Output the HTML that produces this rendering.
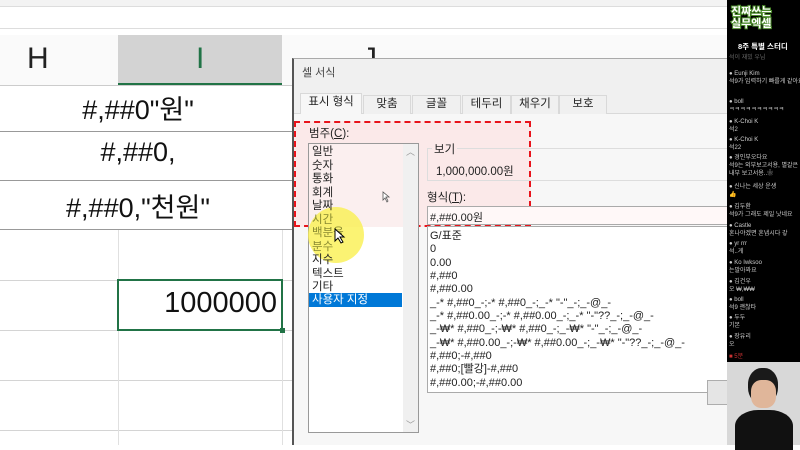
<!DOCTYPE html>
<html><head><meta charset="utf-8"><style>
*{margin:0;padding:0;box-sizing:border-box}
body{width:800px;height:445px;overflow:hidden;position:relative;background:#fff;font-family:"Liberation Sans","Noto Sans CJK KR",sans-serif}
.a{position:absolute}
.hl{position:absolute;height:1px;background:#d4d4d4}
.vl{position:absolute;width:1px;background:#e0e0e0}
.cell{position:absolute;font-size:27px;color:#111;text-align:center;width:290px;left:0}
.li{position:absolute;left:312px;font-size:11.5px;color:#222;line-height:13px}
.fi{position:absolute;left:430px;font-size:11px;color:#222;white-space:nowrap;line-height:13px}
.tab{position:absolute;top:95px;height:19px;font-size:11.5px;color:#222;text-align:center;border:1px solid #d9d9d9;border-bottom:none;background:#f0f0f0;line-height:17px}
.ch{position:absolute;left:729px;font-size:6px;color:#ccc;white-space:nowrap;line-height:8px}
</style></head><body>
<div class="a" style="left:0;top:0;width:800px;height:7px;background:#f3f3f3;border-bottom:1px solid #ddd"></div>
<div class="a" style="left:0;top:28px;width:800px;height:1px;background:#ddd"></div>
<div class="a" style="left:0;top:35px;width:800px;height:50px;background:#fafafa"></div>
<div class="a" style="left:118px;top:35px;width:164px;height:50px;background:#d3d3d3;border-bottom:2px solid #217346"></div>
<div class="a" style="left:27px;top:42px;font-size:30px;color:#222">H</div>
<div class="a" style="left:196px;top:42px;font-size:30px;color:#217346">I</div>
<div class="a" style="left:362px;top:42px;font-size:30px;color:#222">J</div>
<div class="hl" style="left:0;top:85px;width:293px;background:#ccc"></div>
<div class="hl" style="left:0;top:131px;width:293px;background:#999"></div>
<div class="hl" style="left:0;top:180px;width:293px;background:#999"></div>
<div class="hl" style="left:0;top:229px;width:293px;background:#999"></div>
<div class="hl" style="left:0;top:280px;width:293px"></div>
<div class="hl" style="left:0;top:330px;width:293px"></div>
<div class="hl" style="left:0;top:380px;width:293px"></div>
<div class="hl" style="left:0;top:430px;width:293px"></div>
<div class="vl" style="left:118px;top:230px;height:215px"></div>
<div class="vl" style="left:282px;top:230px;height:215px"></div>
<div class="cell" style="top:88px;left:-7px">#,##0"원"</div>
<div class="cell" style="top:137px;left:-7px">#,##0,</div>
<div class="cell" style="top:186px;left:-7px">#,##0,"천원"</div>
<div class="a" style="left:117px;top:279px;width:166px;height:52px;border:2px solid #217346"></div>
<div class="a" style="left:280px;top:328px;width:5px;height:5px;background:#217346"></div>
<div class="a" style="left:117px;top:287px;width:160px;text-align:right;font-size:29px;color:#111">1000000</div>
<!-- dialog -->
<div class="a" style="left:292px;top:58px;width:438px;height:387px;background:#f0f0f0;border-left:2px solid #555;border-top:1px solid #aaa"></div>
<div class="a" style="left:302px;top:64px;font-size:11px;color:#444">셀 서식</div>
<div class="a" style="left:294px;top:113px;width:436px;height:332px;background:#f7f7f7;border-top:1px solid #d9d9d9"></div>
<div class="tab" style="left:300px;width:62px;top:93px;height:21px;background:#f7f7f7">표시 형식</div>
<div class="tab" style="left:363px;width:48px">맞춤</div>
<div class="tab" style="left:412px;width:49px">글꼴</div>
<div class="tab" style="left:462px;width:49px">테두리</div>
<div class="tab" style="left:511px;width:48px">채우기</div>
<div class="tab" style="left:559px;width:48px">보호</div>
<div class="a" style="left:294px;top:121px;width:237px;height:106px;background:#fbe9e9;border:2px dashed #e8131b"></div>
<div class="a" style="left:309px;top:125px;font-size:11.5px;color:#222">범주(<u>C</u>):</div>
<div class="a" style="left:308px;top:143px;width:111px;height:290px;background:#fff;border:1px solid #999"></div>
<div class="a" style="left:308px;top:143px;width:111px;height:84px;background:#fbefef;border:1px solid #999;border-bottom:none"></div>
<div class="a" style="left:403px;top:144px;width:15px;height:288px;background:#f0f0f0"></div>
<div class="a" style="left:406px;top:145px;font-size:9px;color:#999">︿</div>
<div class="a" style="left:406px;top:418px;font-size:9px;color:#999">﹀</div>
<div class="a" style="left:308px;top:207px;width:56px;height:56px;border-radius:50%;background:rgba(250,240,80,.8)"></div>
<div class="a" style="left:309px;top:293px;width:93px;height:14px;background:#0078d7"></div>
<div class="li" style="top:146px">일반</div>
<div class="li" style="top:160px">숫자</div>
<div class="li" style="top:173px">통화</div>
<div class="li" style="top:187px">회계</div>
<div class="li" style="top:200px">날짜</div>
<div class="li" style="top:214px;color:#8a8a30">시간</div>
<div class="li" style="top:227px;color:#8a8a30">백분율</div>
<div class="li" style="top:241px;color:#8a8a30">분수</div>
<div class="li" style="top:254px">지수</div>
<div class="li" style="top:268px">텍스트</div>
<div class="li" style="top:281px">기타</div>
<div class="li" style="top:294px;color:#fff">사용자 지정</div>
<svg class="a" style="left:334px;top:228px" width="12" height="16"><path d="M1 1 L1 13 L4 10 L7 15 L9 14 L6 9 L10 9 Z" fill="#fff" stroke="#000" stroke-width="1"/></svg>
<svg class="a" style="left:382px;top:191px" width="9" height="12"><path d="M1 1 L1 9 L3 7 L5 11 L6 10 L4 6 L7 6 Z" fill="#fff" stroke="#555" stroke-width=".8"/></svg>
<div class="a" style="left:427px;top:148px;width:303px;height:33px;border:1px solid #ddd"></div>
<div class="a" style="left:432px;top:141px;font-size:11.5px;color:#222;background:#fbe9e9;padding:0 2px">보기</div>
<div class="a" style="left:436px;top:163px;font-size:11.5px;color:#222">1,000,000.00원</div>
<div class="a" style="left:427px;top:189px;font-size:11.5px;color:#222">형식(<u>T</u>):</div>
<div class="a" style="left:427px;top:206px;width:303px;height:19px;background:#fff8f8;border:1px solid #aaa;font-size:11px;padding:2px 2px;color:#222">#,##0.00원</div>
<div class="a" style="left:427px;top:226px;width:303px;height:167px;background:#fff;border:1px solid #aaa"></div>
<div class="fi" style="top:230px">G/표준</div>
<div class="fi" style="top:243px">0</div>
<div class="fi" style="top:257px">0.00</div>
<div class="fi" style="top:270px">#,##0</div>
<div class="fi" style="top:283px">#,##0.00</div>
<div class="fi" style="top:297px">_-* #,##0_-;-* #,##0_-;_-* "-"_-;_-@_-</div>
<div class="fi" style="top:310px">_-* #,##0.00_-;-* #,##0.00_-;_-* "-"??_-;_-@_-</div>
<div class="fi" style="top:323px">_-₩* #,##0_-;-₩* #,##0_-;_-₩* "-"_-;_-@_-</div>
<div class="fi" style="top:337px">_-₩* #,##0.00_-;-₩* #,##0.00_-;_-₩* "-"??_-;_-@_-</div>
<div class="fi" style="top:350px">#,##0;-#,##0</div>
<div class="fi" style="top:363px">#,##0;[빨강]-#,##0</div>
<div class="fi" style="top:377px">#,##0.00;-#,##0.00</div>
<div class="a" style="left:707px;top:380px;width:25px;height:25px;background:#e5e5e5;border:1px solid #adadad"></div>
<!-- chat -->
<div class="a" style="left:727px;top:0;width:73px;height:445px;background:#000"></div>
<div class="a" style="left:731px;top:6px;font-size:11px;font-weight:bold;color:#fff;line-height:12px;-webkit-text-stroke:2px #4a8a2a;paint-order:stroke">진짜쓰는<br>실무엑셀</div>
<div class="a" style="left:738px;top:41px;font-size:7.5px;font-weight:bold;color:#fff">8주 특별 스터디</div>
<div class="ch" style="top:54px;color:#666">석이 재밌 우님</div>
<div class="ch" style="top:70px">● Eunji Kim<br>석9가 입력하기 빠를게 같아요</div>
<div class="ch" style="top:98px">● boll<br>ㅋㅋㅋㅋㅋㅋㅋㅋㅋㅋ</div>
<div class="ch" style="top:118px">● K-Choi K<br>석2</div>
<div class="ch" style="top:136px">● K-Choi K<br>석22</div>
<div class="ch" style="top:154px">● 경인부오다요<br>석9는 외부보고서용, 별갈은<br>내부 보고서용..❀</div>
<div class="ch" style="top:183px">● 신나는 세상 운생<br><span style="color:#f5b400">👍</span></div>
<div class="ch" style="top:203px">● 김두환<br>석9가 그래도 제일 낫네요</div>
<div class="ch" style="top:222px">● Castle<br>혼나야겠면 혼냅시다 갛</div>
<div class="ch" style="top:240px">● yr rrr<br>석..게</div>
<div class="ch" style="top:259px">● Ko Iwksoo<br>는말아꽈요</div>
<div class="ch" style="top:278px">● 김건우<br>오 ₩,₩₩</div>
<div class="ch" style="top:296px">● boll<br>석9 괜찮타</div>
<div class="ch" style="top:314px">● 두두<br>기본</div>
<div class="ch" style="top:333px">● 장유리<br>오</div>
<div class="ch" style="top:353px;color:#c33">■ 5분</div>
<div class="a" style="left:727px;top:362px;width:73px;height:83px;background:#d8d8d8"></div>
<div class="a" style="left:748px;top:368px;width:30px;height:36px;border-radius:45%;background:#1a1a1a"></div>
<div class="a" style="left:751px;top:380px;width:25px;height:28px;border-radius:40%;background:#e0b69a"></div>
<div class="a" style="left:735px;top:410px;width:58px;height:40px;border-radius:40% 40% 0 0;background:#111"></div>
</body></html>
